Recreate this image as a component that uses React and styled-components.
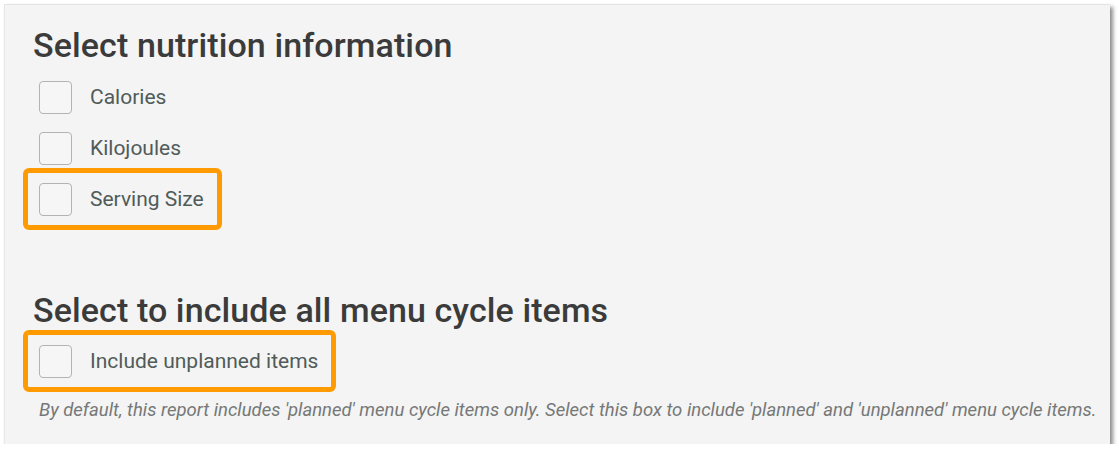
import React from "react";
import styled, { createGlobalStyle } from "styled-components";

const Global = createGlobalStyle`
  html, body { margin: 0; padding: 0; background: #ffffff; }
  body { font-family: Roboto, "Liberation Sans", Arial, sans-serif; }
`;

const Panel = styled.div`
  box-sizing: border-box;
  margin: 4px 0 0 4px;
  width: 1106px;
  height: 440px;
  background: #f3f4f3;
  border-top: 1px solid #e2e3e2;
  border-left: 1px solid #e6e7e6;
  box-shadow: 3px 3px 4px rgba(0, 0, 0, 0.45);
  padding: 20px 0 0 28px;
  display: flex;
  flex-direction: column;
  align-items: flex-start;
`;

const Heading = styled.h2`
  margin: 0;
  font-size: 34px;
  line-height: 40px;
  font-weight: 500;
  color: #3b3b3b;
  letter-spacing: 0.1px;
`;

const List = styled.div`
  display: flex;
  flex-direction: column;
  align-items: flex-start;
  gap: 18px;
  margin-top: ${(p) => p.$top}px;
  padding-left: 6px;
`;

const Row = styled.label`
  position: relative;
  display: inline-flex;
  align-items: center;
  height: 33px;
  gap: 18px;
  padding-right: 3px;

  &::after {
    content: "";
    display: ${(p) => (p.$highlight ? "block" : "none")};
    position: absolute;
    left: -16px;
    top: -15px;
    right: -15px;
    bottom: -14px;
    border: 5px solid #ff9a00;
    border-radius: 6px;
    pointer-events: none;
  }
`;

const Box = styled.span`
  box-sizing: border-box;
  width: 33px;
  height: 33px;
  border: 1px solid #b3b3b3;
  border-radius: 4px;
  background: #f6f6f6;
  flex: none;
`;

const Label = styled.span`
  font-size: 21px;
  line-height: 24px;
  color: #515b5a;
  transform: translateY(-1px);
`;

const Spacer = styled.div`
  height: ${(p) => p.$h}px;
`;

const Note = styled.p`
  margin: 21px 0 0 6px;
  font-size: 18.5px;
  line-height: 22px;
  font-style: italic;
  color: #767878;
  white-space: nowrap;
`;

const Check = ({ label, highlight }) => (
  <Row $highlight={highlight}>
    <Box />
    <Label>{label}</Label>
  </Row>
);

export default function App() {
  return (
    <>
      <Global />
      <Panel>
        <Heading>Select nutrition information</Heading>
        <List $top={16}>
          <Check label="Calories" />
          <Check label="Kilojoules" />
          <Check label="Serving Size" highlight />
        </List>
        <Spacer $h={74} />
        <Heading>Select to include all menu cycle items</Heading>
        <List $top={15}>
          <Check label="Include unplanned items" highlight />
        </List>
        <Note>
          By default, this report includes 'planned' menu cycle items only. Select this box to include 'planned' and 'unplanned' menu cycle items.
        </Note>
      </Panel>
    </>
  );
}
